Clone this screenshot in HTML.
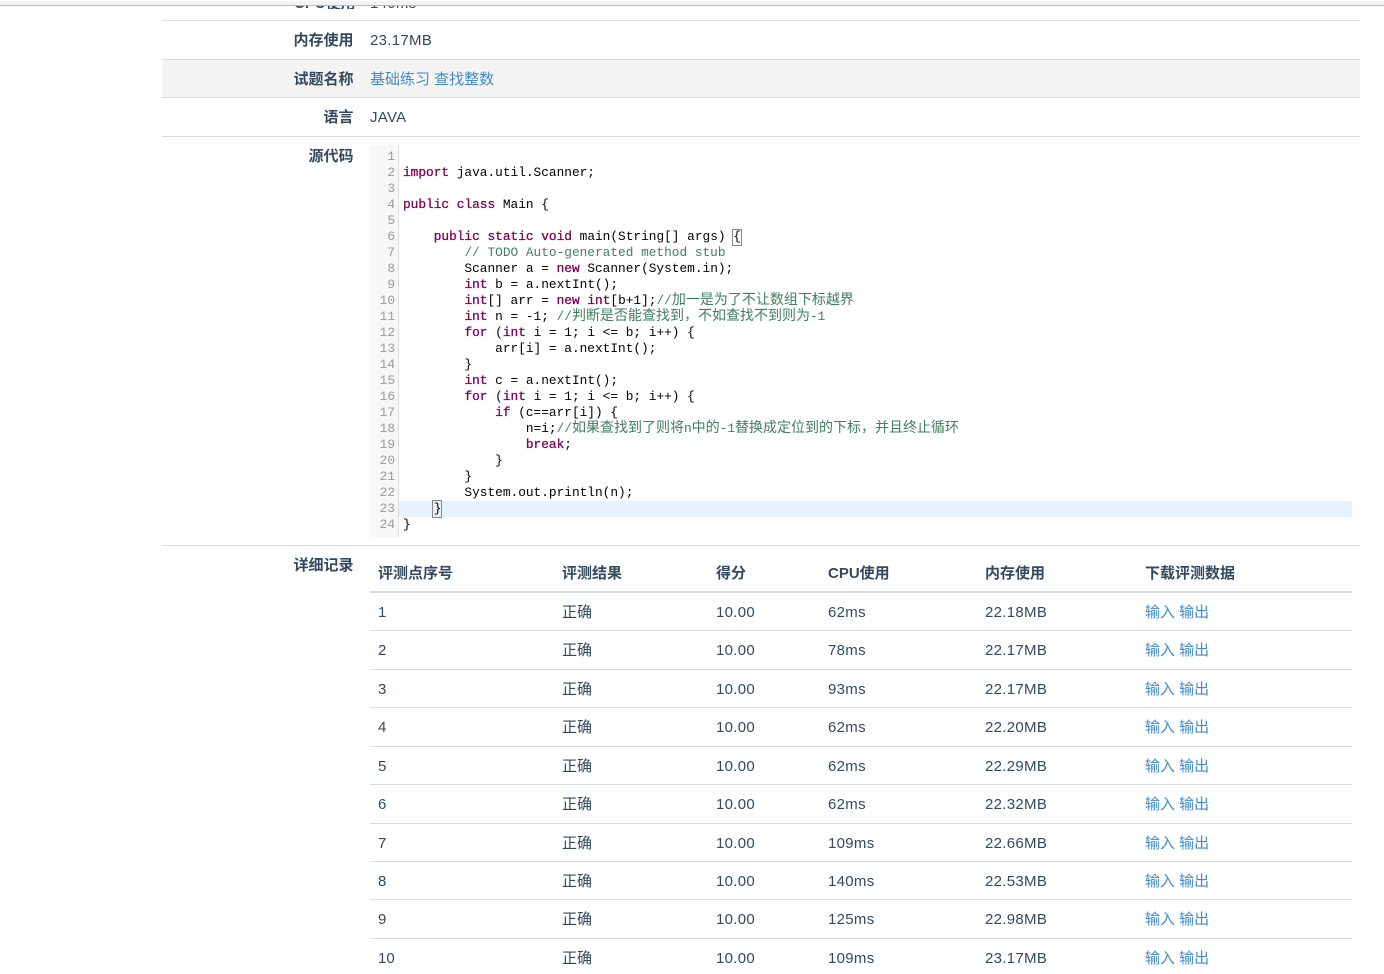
<!DOCTYPE html>
<html lang="zh"><head><meta charset="utf-8"><title>评测详情</title>
<style>
html,body{margin:0;padding:0;background:#fff;width:1384px;height:974px;overflow:hidden}
body{position:relative;font-family:"Liberation Sans","Noto Sans CJK SC",sans-serif;font-size:15px;color:#34495e}
.a{position:absolute;white-space:pre;line-height:20px;margin-top:1px}
.hl{position:absolute;left:162px;width:1198px;height:1px;background:#ddd}
.tl{position:absolute;left:370px;width:982px;height:1px;background:#ddd}
.lb{position:absolute;right:1030.5px;white-space:pre;line-height:20px;font-weight:700;color:#34495e;margin-top:1px}
.v{letter-spacing:.3px}
a{color:#428bca;text-decoration:none}
.th{font-weight:700}
#code{position:absolute;left:403px;top:149px;font:12.8px/16px "Liberation Mono","Noto Sans CJK SC",monospace;color:#000;white-space:pre}
#nums{position:absolute;left:370px;top:149px;width:25px;text-align:right;font:12.8px/16px "Liberation Mono",monospace;color:#999;white-space:pre}
.k{color:#7f0055;-webkit-text-stroke:.3px #7f0055}.c{color:#3f7f5f}
.z{font:14px/0 "Noto Sans CJK SC",sans-serif}
</style></head><body>
<div style="position:absolute;left:0;top:1px;width:1384px;height:4px;background:#f3f3f3"></div>

<div style="position:absolute;left:0;top:6px;width:1384px;height:3px;overflow:hidden">
<div class="lb" style="top:-13px;left:294px;right:auto">CPU使用</div>
<div class="a v" style="left:370px;top:-13px">140ms</div>
</div>
<div style="position:absolute;left:0;top:5px;width:1384px;height:1px;background:#bbb"></div>

<div class="hl" style="top:20px"></div>
<div class="lb" style="top:30px">内存使用</div><div class="a v" style="left:370px;top:30px">23.17MB</div>
<div style="position:absolute;left:162px;top:59px;width:1198px;height:39px;background:#f4f4f4;border-top:1px solid #ddd;border-bottom:1px solid #ddd;box-sizing:border-box"></div>
<div class="lb" style="top:69px">试题名称</div><div class="a" style="left:370px;top:69px"><a>基础练习 查找整数</a></div>
<div class="lb" style="top:107px">语言</div><div class="a v" style="left:370px;top:107px">JAVA</div>
<div class="hl" style="top:136px"></div>
<div class="lb" style="top:146px">源代码</div>

<div style="position:absolute;left:370px;top:145px;width:28px;height:392px;background:#f7f7f7;border-right:1px solid #ddd"></div>
<div style="position:absolute;left:399px;top:501px;width:953px;height:16px;background:#e8f2fe"></div>
<div id="nums">1
2
3
4
5
6
7
8
9
10
11
12
13
14
15
16
17
18
19
20
21
22
23
24</div>
<div style="position:absolute;left:732px;top:229px;width:10px;height:17px;box-sizing:border-box;border:1px solid #888"></div>
<div style="position:absolute;left:432px;top:500px;width:10px;height:18px;box-sizing:border-box;border:1px solid #888"></div>
<div id="code">
<span class="k">import</span> java.util.Scanner;

<span class="k">public</span> <span class="k">class</span> Main {

    <span class="k">public</span> <span class="k">static</span> <span class="k">void</span> main(String[] args) {
        <span class="c">// TODO Auto-generated method stub</span>
        Scanner a = <span class="k">new</span> Scanner(System.in);
        <span class="k">int</span> b = a.nextInt();
        <span class="k">int</span>[] arr = <span class="k">new</span> <span class="k">int</span>[b+1];<span class="c">//<span class="z">加一是为了不让数组下标越界</span></span>
        <span class="k">int</span> n = -1; <span class="c">//<span class="z">判断是否能查找到，不如查找不到则为</span>-1</span>
        <span class="k">for</span> (<span class="k">int</span> i = 1; i &lt;= b; i++) {
            arr[i] = a.nextInt();
        }
        <span class="k">int</span> c = a.nextInt();
        <span class="k">for</span> (<span class="k">int</span> i = 1; i &lt;= b; i++) {
            <span class="k">if</span> (c==arr[i]) {
                n=i;<span class="c">//<span class="z">如果查找到了则将</span>n<span class="z">中的</span>-1<span class="z">替换成定位到的下标，并且终止循环</span></span>
                <span class="k">break</span>;
            }
        }
        System.out.println(n);
    }
}</div>

<div class="hl" style="top:545px"></div>
<div class="lb" style="top:555px">详细记录</div>

<div class="a th" style="left:378px;top:563px">评测点序号</div>
<div class="a th" style="left:562px;top:563px">评测结果</div>
<div class="a th" style="left:716px;top:563px">得分</div>
<div class="a th" style="left:828px;top:563px">CPU使用</div>
<div class="a th" style="left:985px;top:563px">内存使用</div>
<div class="a th" style="left:1145px;top:563px">下载评测数据</div>
<div class="tl" style="top:591px;height:2px"></div>

<div class="a" style="left:378px;top:602px">1</div><div class="a" style="left:562px;top:602px">正确</div><div class="a v" style="left:716px;top:602px">10.00</div><div class="a v" style="left:828px;top:602px">62ms</div><div class="a v" style="left:985px;top:602px">22.18MB</div><div class="a" style="left:1145px;top:602px"><a>输入 输出</a></div>
<div class="tl" style="top:630px"></div>
<div class="a" style="left:378px;top:640px">2</div><div class="a" style="left:562px;top:640px">正确</div><div class="a v" style="left:716px;top:640px">10.00</div><div class="a v" style="left:828px;top:640px">78ms</div><div class="a v" style="left:985px;top:640px">22.17MB</div><div class="a" style="left:1145px;top:640px"><a>输入 输出</a></div>
<div class="tl" style="top:669px"></div>
<div class="a" style="left:378px;top:679px">3</div><div class="a" style="left:562px;top:679px">正确</div><div class="a v" style="left:716px;top:679px">10.00</div><div class="a v" style="left:828px;top:679px">93ms</div><div class="a v" style="left:985px;top:679px">22.17MB</div><div class="a" style="left:1145px;top:679px"><a>输入 输出</a></div>
<div class="tl" style="top:707px"></div>
<div class="a" style="left:378px;top:717px">4</div><div class="a" style="left:562px;top:717px">正确</div><div class="a v" style="left:716px;top:717px">10.00</div><div class="a v" style="left:828px;top:717px">62ms</div><div class="a v" style="left:985px;top:717px">22.20MB</div><div class="a" style="left:1145px;top:717px"><a>输入 输出</a></div>
<div class="tl" style="top:746px"></div>
<div class="a" style="left:378px;top:756px">5</div><div class="a" style="left:562px;top:756px">正确</div><div class="a v" style="left:716px;top:756px">10.00</div><div class="a v" style="left:828px;top:756px">62ms</div><div class="a v" style="left:985px;top:756px">22.29MB</div><div class="a" style="left:1145px;top:756px"><a>输入 输出</a></div>
<div class="tl" style="top:784px"></div>
<div class="a" style="left:378px;top:794px">6</div><div class="a" style="left:562px;top:794px">正确</div><div class="a v" style="left:716px;top:794px">10.00</div><div class="a v" style="left:828px;top:794px">62ms</div><div class="a v" style="left:985px;top:794px">22.32MB</div><div class="a" style="left:1145px;top:794px"><a>输入 输出</a></div>
<div class="tl" style="top:823px"></div>
<div class="a" style="left:378px;top:833px">7</div><div class="a" style="left:562px;top:833px">正确</div><div class="a v" style="left:716px;top:833px">10.00</div><div class="a v" style="left:828px;top:833px">109ms</div><div class="a v" style="left:985px;top:833px">22.66MB</div><div class="a" style="left:1145px;top:833px"><a>输入 输出</a></div>
<div class="tl" style="top:861px"></div>
<div class="a" style="left:378px;top:871px">8</div><div class="a" style="left:562px;top:871px">正确</div><div class="a v" style="left:716px;top:871px">10.00</div><div class="a v" style="left:828px;top:871px">140ms</div><div class="a v" style="left:985px;top:871px">22.53MB</div><div class="a" style="left:1145px;top:871px"><a>输入 输出</a></div>
<div class="tl" style="top:899px"></div>
<div class="a" style="left:378px;top:909px">9</div><div class="a" style="left:562px;top:909px">正确</div><div class="a v" style="left:716px;top:909px">10.00</div><div class="a v" style="left:828px;top:909px">125ms</div><div class="a v" style="left:985px;top:909px">22.98MB</div><div class="a" style="left:1145px;top:909px"><a>输入 输出</a></div>
<div class="tl" style="top:938px"></div>
<div class="a" style="left:378px;top:948px">10</div><div class="a" style="left:562px;top:948px">正确</div><div class="a v" style="left:716px;top:948px">10.00</div><div class="a v" style="left:828px;top:948px">109ms</div><div class="a v" style="left:985px;top:948px">23.17MB</div><div class="a" style="left:1145px;top:948px"><a>输入 输出</a></div>
</body></html>
